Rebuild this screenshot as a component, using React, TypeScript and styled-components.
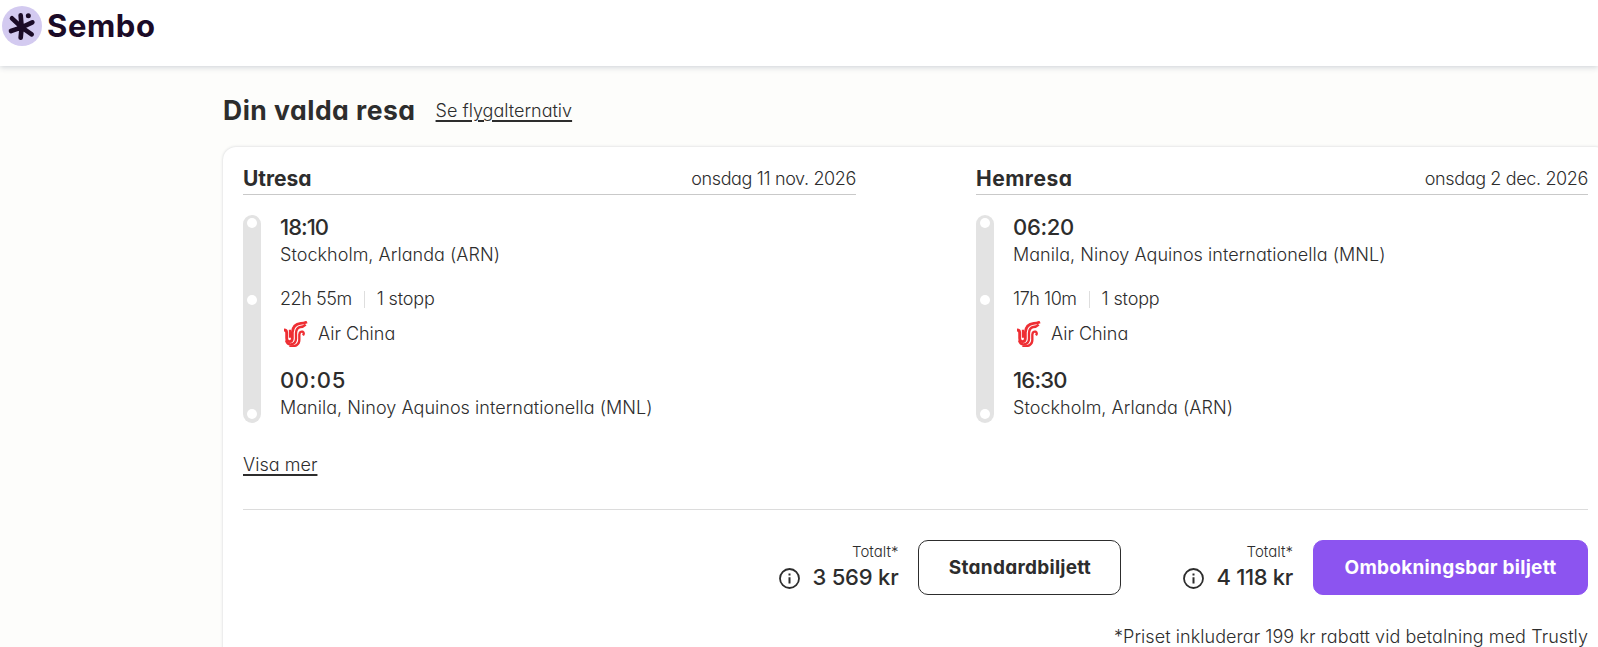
import React from "react";
import styled, { createGlobalStyle } from "styled-components";

const GlobalStyle = createGlobalStyle`
  * {
    box-sizing: border-box;
  }

  body {
    margin: 0;
    background: #fdfdfb;
    color: #2d2d2d;
    font-family: Inter, "Open Sans", sans-serif;
    font-feature-settings: "cv11";
    font-size: 18px;
    font-weight: 300;
    line-height: 24px;
  }
`;

const Page = styled.div`
  height: 647px;
  overflow: hidden;
`;

const Header = styled.header`
  display: flex;
  align-items: flex-start;
  height: 66px;
  padding: 6px 2px;
  background: #fff;
  box-shadow: 0 1px 6px rgba(40, 60, 90, 0.24);
`;

const Logo = styled.a`
  display: flex;
  align-items: center;
  gap: 5px;
  color: #1b0b27;
`;

const LogoText = styled.span`
  font-size: 31px;
  font-weight: 700;
  line-height: 38px;
  letter-spacing: 0.6px;
`;

const Main = styled.main`
  width: 1385px;
  margin-left: 223px;
  padding-top: 24px;
`;

const TitleRow = styled.div`
  display: flex;
  align-items: center;
  gap: 20px;
  height: 40px;
`;

const Title = styled.h1`
  margin: 0;
  font-size: 26.5px;
  font-weight: 650;
  letter-spacing: 0.5px;
`;

const TextLink = styled.a`
  color: inherit;
  letter-spacing: 0.04px;
  text-decoration: underline;
  text-decoration-thickness: 2px;
  text-underline-offset: 3px;
`;

const TitleLink = styled(TextLink)`
  padding-top: 2px;
  letter-spacing: 0;
`;

const Card = styled.section`
  margin-top: 17px;
  height: 560px;
  padding: 20px;
  background: #fff;
  border-radius: 13px;
  box-shadow: 0 0 3px rgba(40, 50, 70, 0.22);
`;

const Legs = styled.div`
  display: grid;
  grid-template-columns: 613px 612px;
  gap: 120px;
`;

const LegHead = styled.div`
  display: flex;
  justify-content: space-between;
  height: 28px;
  border-bottom: 1px solid #c9c9c9;
  line-height: 23px;
`;

const LegTitle = styled.h2<{ $track: number }>`
  margin: 0;
  font-size: 21px;
  font-weight: 650;
  letter-spacing: ${(p) => p.$track}px;
`;

const LegDate = styled.span`
  letter-spacing: -0.36px;
`;

const LegBody = styled.div`
  display: flex;
  gap: 19px;
  margin-top: 20px;
`;

const Timeline = styled.div`
  display: flex;
  flex-direction: column;
  align-items: center;
  width: 18px;
  height: 208px;
  padding: 3px 0 4px;
  background: #e3e3e3;
  border-radius: 9px;
`;

const Dot = styled.i`
  width: 10px;
  height: 10px;
  border-radius: 50%;
  background: #fff;

  &:nth-child(2) {
    margin: 67px 0 auto;
  }
`;

const Stops = styled.div`
  display: flex;
  flex-direction: column;
`;

const Time = styled.strong<{ $track: number }>`
  font-size: 22px;
  font-weight: 550;
  letter-spacing: ${(p) => p.$track}px;
`;

const Place = styled.span`
  margin-top: 4px;
  letter-spacing: 0.04px;
`;

const Duration = styled.div`
  display: flex;
  align-items: center;
  margin-top: 20px;
  letter-spacing: -0.45px;
`;

const Divider = styled.i`
  width: 1px;
  height: 17px;
  margin: 0 12px;
  background: #dedede;
`;

const StopCount = styled.span`
  letter-spacing: -0.15px;
`;

const Airline = styled.div`
  display: flex;
  align-items: center;
  gap: 9px;
  height: 24px;
  margin: 11px 0 22px;
  padding-left: 4px;
`;

const MoreRow = styled.div`
  height: 87px;
  padding-top: 30px;
  border-bottom: 1px solid #dcdcdc;
`;

const Offers = styled.div`
  display: flex;
  justify-content: flex-end;
  gap: 62px;
  width: 1345px;
  margin-top: 30px;
`;

const Offer = styled.div`
  display: flex;
  gap: 20px;
`;

const Price = styled.div`
  display: flex;
  flex-direction: column;
  align-items: flex-end;
`;

const PriceLabel = styled.span`
  font-size: 15px;
`;

const Amount = styled.div<{ $track: number }>`
  display: flex;
  align-items: center;
  gap: 12px;
  font-size: 22px;
  font-weight: 550;
  line-height: 26px;
  letter-spacing: ${(p) => p.$track}px;

  svg {
    margin-top: 2px;
  }
`;

const BuyButton = styled.button<{ $primary?: boolean }>`
  width: ${(p) => (p.$primary ? 275 : 203)}px;
  height: 55px;
  padding: 0 0 1px;
  border: 1px solid ${(p) => (p.$primary ? "#8c54f0" : "#2d2d2d")};
  border-radius: 10px;
  background: ${(p) => (p.$primary ? "#8c54f0" : "#fff")};
  color: ${(p) => (p.$primary ? "#fff" : "#2d2d2d")};
  font-family: inherit;
  font-feature-settings: inherit;
  font-size: 19px;
  font-weight: 700;
  letter-spacing: 0.27px;
`;

const Footnote = styled.p`
  width: 1345px;
  margin: 30px 0 0;
  text-align: right;
  letter-spacing: 0.06px;
`;

const LogoMark = () => (
  <svg width="40" height="40" viewBox="0 0 120 120">
    <circle cx="60" cy="60" r="60" fill="#d3caf0" />
    <g stroke="#1b0b27" strokeWidth="14" strokeLinecap="round">
      <path d="M30 37L59 64M56 28L59 64M91 49L59 64M89 85L59 64M56 95L59 64M27 75L59 64" />
    </g>
    <circle cx="79" cy="29" r="7.5" fill="#1b0b27" />
  </svg>
);

const AirChinaLogo = () => (
  <svg width="25" height="26" viewBox="0 0 75 78" fill="none">
    <g stroke="#ee2e33">
      <path d="M0 27Q8 27 8 35V52Q8 62 17 62Q25 62 25 52V34Q27 9 50 7Q60 7 69 3" strokeWidth="8.5" />
      <path d="M18 26V50M6 58Q10 71 21 70Q36 67 36 53V36Q37 20 49 18Q58 18 65 11" strokeWidth="7" />
      <path d="M16 76Q46 77 46 57V41Q47 30 56 32Q62 36 57 43" strokeWidth="7" />
    </g>
  </svg>
);

const InfoIcon = () => (
  <svg width="21" height="21" viewBox="0 0 21 21" fill="none">
    <circle cx="10.5" cy="10.5" r="9.5" stroke="#2d2d2d" strokeWidth="1.8" />
    <path d="M10.5 9.2V15.6M10.5 5.6V7.6" stroke="#2d2d2d" strokeWidth="2" />
  </svg>
);

type Stop = { time: string; track: number; place: string };

type Leg = {
  title: string;
  titleTrack: number;
  date: string;
  from: Stop;
  to: Stop;
  duration: string;
};

const legs: Leg[] = [
  {
    title: "Utresa",
    titleTrack: 0,
    date: "onsdag 11 nov. 2026",
    from: { time: "18:10", track: -1, place: "Stockholm, Arlanda (ARN)" },
    to: {
      time: "00:05",
      track: 0.6,
      place: "Manila, Ninoy Aquinos internationella (MNL)",
    },
    duration: "22h 55m",
  },
  {
    title: "Hemresa",
    titleTrack: 0.5,
    date: "onsdag 2 dec. 2026",
    from: {
      time: "06:20",
      track: -0.3,
      place: "Manila, Ninoy Aquinos internationella (MNL)",
    },
    to: { time: "16:30", track: -0.8, place: "Stockholm, Arlanda (ARN)" },
    duration: "17h 10m",
  },
];

function FlightLeg({ leg }: { leg: Leg }) {
  return (
    <div>
      <LegHead>
        <LegTitle $track={leg.titleTrack}>{leg.title}</LegTitle>
        <LegDate>{leg.date}</LegDate>
      </LegHead>
      <LegBody>
        <Timeline>
          <Dot />
          <Dot />
          <Dot />
        </Timeline>
        <Stops>
          <Time $track={leg.from.track}>{leg.from.time}</Time>
          <Place>{leg.from.place}</Place>
          <Duration>
            {leg.duration}
            <Divider />
            <StopCount>1 stopp</StopCount>
          </Duration>
          <Airline>
            <AirChinaLogo />
            Air China
          </Airline>
          <Time $track={leg.to.track}>{leg.to.time}</Time>
          <Place>{leg.to.place}</Place>
        </Stops>
      </LegBody>
    </div>
  );
}

export default function App() {
  return (
    <Page>
      <GlobalStyle />
      <Header>
        <Logo>
          <LogoMark />
          <LogoText>Sembo</LogoText>
        </Logo>
      </Header>

      <Main>
        <TitleRow>
          <Title>Din valda resa</Title>
          <TitleLink>Se flygalternativ</TitleLink>
        </TitleRow>

        <Card>
          <Legs>
            {legs.map((leg) => (
              <FlightLeg key={leg.title} leg={leg} />
            ))}
          </Legs>

          <MoreRow>
            <TextLink>Visa mer</TextLink>
          </MoreRow>

          {/* Ticket options */}
          <Offers>
            <Offer>
              <Price>
                <PriceLabel>Totalt*</PriceLabel>
                <Amount $track={-0.2}>
                  <InfoIcon />3 569 kr
                </Amount>
              </Price>
              <BuyButton>Standardbiljett</BuyButton>
            </Offer>
            <Offer>
              <Price>
                <PriceLabel>Totalt*</PriceLabel>
                <Amount $track={-0.32}>
                  <InfoIcon />4 118 kr
                </Amount>
              </Price>
              <BuyButton $primary>Ombokningsbar biljett</BuyButton>
            </Offer>
          </Offers>

          <Footnote>
            *Priset inkluderar 199 kr rabatt vid betalning med Trustly
          </Footnote>
        </Card>
      </Main>
    </Page>
  );
}
